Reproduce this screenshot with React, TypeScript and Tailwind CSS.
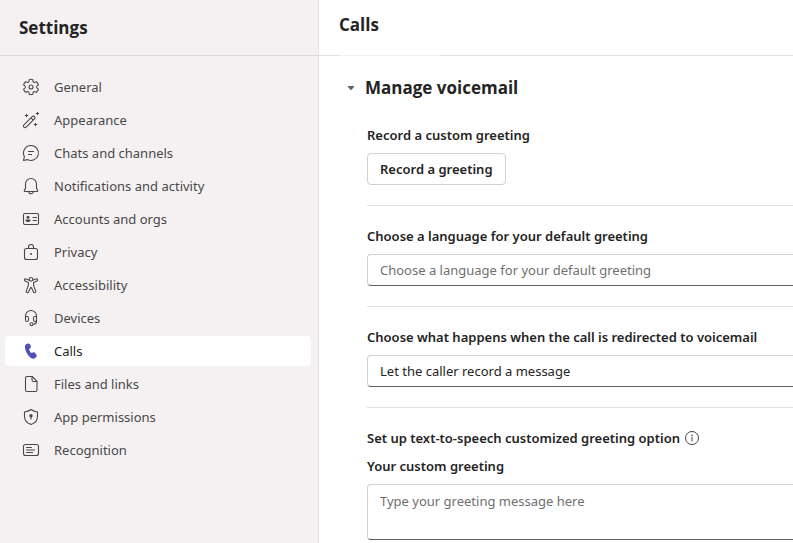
import React from "react";

type IconProps = { children: React.ReactNode };

const Icon: React.FC<IconProps> = ({ children }) => (
    <svg
        viewBox="0 0 20 20"
        className="h-5 w-5 shrink-0"
        fill="none"
        stroke="currentColor"
        strokeWidth="1.1"
        strokeLinecap="round"
        strokeLinejoin="round"
        aria-hidden="true"
    >
        {children}
    </svg>
);

const navItems = [
    {
        label: "General",
        icon: (
            <>
                <path d="M8.2 2.7Q10 1.9 11.8 2.7L12 4.3Q12.4 5.8 13.8 5.3L15.4 4.7Q16.9 5.9 17.4 7.8L16.1 8.9Q15 10 16.1 11.1L17.4 12.2Q16.9 14.1 15.4 15.3L13.8 14.7Q12.4 14.2 12 15.7L11.8 17.3Q10 18.1 8.2 17.3L8 15.7Q7.6 14.2 6.2 14.7L4.6 15.3Q3.1 14.1 2.6 12.2L3.9 11.1Q5 10 3.9 8.9L2.6 7.8Q3.1 5.9 4.6 4.7L6.2 5.3Q7.6 5.8 8 4.3Z" />
                <circle cx="10" cy="10" r="2" />
            </>
        ),
    },
    {
        label: "Appearance",
        icon: (
            <>
                <path d="M11.2 6.6a1.6 1.6 0 0 1 2.3 2.3L5.2 17.2a1.6 1.6 0 0 1-2.3-2.3zM10 7.8l2.3 2.3" />
                <path d="M5.5 4.3v2.4M4.3 5.5h2.4M16.5 2.3v2.4M15.3 3.5h2.4M14.5 13.3v2.4M13.3 14.5h2.4" />
            </>
        ),
    },
    {
        label: "Chats and channels",
        icon: (
            <>
                <path d="M10 2.5a7.5 7.5 0 1 1-3.6 14.1l-3.9.9.9-3.9A7.5 7.5 0 0 1 10 2.5z" />
                <path d="M7.5 8.5h5M7.5 11.5h3" />
            </>
        ),
    },
    {
        label: "Notifications and activity",
        icon: (
            <>
                <path d="M10 2.5A5.5 5.5 0 0 0 4.5 8v4l-1.2 2.8a.5.5 0 0 0 .5.7h12.4a.5.5 0 0 0 .5-.7L15.5 12V8A5.5 5.5 0 0 0 10 2.5z" />
                <path d="M7.8 15.8a2.2 2 0 0 0 4.4 0" />
            </>
        ),
    },
    {
        label: "Accounts and orgs",
        icon: (
            <>
                <rect x="2.5" y="4.5" width="15" height="11" rx="1.5" />
                <circle cx="7" cy="8.3" r="1.5" fill="currentColor" stroke="none" />
                <path d="M4.5 10.5h5v.7c0 1.2-1.1 1.8-2.5 1.8s-2.5-.6-2.5-1.8z" fill="currentColor" stroke="none" />
                <path d="M12 8.5h3.5M12 11.5h3.5" />
            </>
        ),
    },
    {
        label: "Privacy",
        icon: (
            <>
                <rect x="3.5" y="6.5" width="13" height="11" rx="2" />
                <path d="M7.5 6.5V5a2.5 2.5 0 0 1 5 0v1.5" />
                <circle cx="10" cy="12" r="1" fill="currentColor" stroke="none" />
            </>
        ),
    },
    {
        label: "Accessibility",
        icon: (
            <>
                <circle cx="10" cy="4.3" r="1.8" />
                <path d="M8.4 5.2L5.1 3.9a1.2 1.2 0 0 0-1 2.2L7.4 7.6v3L5.3 15.9a1.2 1.2 0 0 0 2.2 1l2.1-4.2q.4-.6.8 0l2.1 4.2a1.2 1.2 0 0 0 2.2-1l-2.1-5.3v-3l3.3-1.5a1.2 1.2 0 0 0-1-2.2l-3.3 1.3" />
            </>
        ),
    },
    {
        label: "Devices",
        icon: (
            <>
                <path d="M4.5 9V8a5.5 5.5 0 0 1 11 0v1" />
                <path d="M4.5 8.5H6A1.5 1.5 0 0 1 7.5 10v2A1.5 1.5 0 0 1 6 13.5a1.5 1.5 0 0 1-1.5-1.5zM15.5 8.5H14a1.5 1.5 0 0 0-1.5 1.5v2a1.5 1.5 0 0 0 1.5 1.5 1.5 1.5 0 0 0 1.5-1.5z" />
                <path d="M15.5 12v1.5c0 1.6-1.3 2.7-3 2.7" />
                <circle cx="10.5" cy="16.2" r="1.5" />
            </>
        ),
    },
    {
        label: "Calls",
        icon: (
            <path
                d="M7.06 2.42l-.96.29a3 3 0 0 0-2.05 2.14c-.46 2.03.19 4.47 1.9 7.43 1.7 2.94 3.48 4.72 5.47 5.3a3 3 0 0 0 2.91-.75l.74-.7a2 2 0 0 0 .25-2.61l-1.12-1.52a1.75 1.75 0 0 0-1.9-.64l-1.73.52c-.36.03-1-.48-1.65-1.6-.68-1.18-.85-1.98-.6-2.22l1.06-.98a1.75 1.75 0 0 0 .4-1.98l-.6-1.57a2 2 0 0 0-2.12-1.11z"
                fill="currentColor"
                stroke="none"
            />
        ),
    },
    {
        label: "Files and links",
        icon: (
            <>
                <path d="M6 2.5h5.2L16 7.3V16a1.5 1.5 0 0 1-1.5 1.5H6A1.5 1.5 0 0 1 4.5 16V4A1.5 1.5 0 0 1 6 2.5z" />
                <path d="M11 2.7V6a1.5 1.5 0 0 0 1.5 1.5h3.3" />
            </>
        ),
    },
    {
        label: "App permissions",
        icon: (
            <>
                <path d="M10 2.5q2.8 2 6.5 2.500v4.500q0 5.800-6.500 8-6.500-2.200-6.500-8V5Q7.200 4.500 10 2.500z" />
                <circle cx="10" cy="8.7" r="1.7" fill="currentColor" stroke="none" />
                <path d="M10 9v3" />
            </>
        ),
    },
    {
        label: "Recognition",
        icon: (
            <>
                <rect x="2.5" y="4.5" width="15" height="11" rx="2" />
                <path d="M5.5 7.5h5M5.5 10h8M5.5 12.5h6" />
            </>
        ),
    },
];

const fieldClass =
    "block w-full appearance-none rounded-l border border-r-0 border-[#d1d1d1] border-b-[#616161] bg-white px-3 text-[13px] leading-5 outline-none";

const labelClass = "block text-[13px] leading-5 font-semibold text-[#242424]";

const headingClass = "font-['Open_Sans',sans-serif] text-[17px] leading-6 font-bold";

const App: React.FC = () => {
    return (
        <div className="flex min-h-screen bg-white font-['Noto_Sans',sans-serif] text-[#242424]">
            {/* Sidebar */}
            <aside className="w-[319px] shrink-0 border-r border-[#e0dee0] bg-[#f5f1f3]">
                <header className="flex h-14 items-center border-b border-[#dbd8db] px-[19px]">
                    <h1 className={headingClass}>Settings</h1>
                </header>
                <nav className="flex flex-col gap-[3px] pt-4 pr-[7px] pl-[5px]">
                    {navItems.map((item) => (
                        <a
                            key={item.label}
                            href="#"
                            aria-current={item.label === "Calls" ? "page" : undefined}
                            className="group flex h-[30px] items-center gap-[13px] rounded px-4 text-[13px] leading-5 text-[#484848] aria-[current=page]:bg-white aria-[current=page]:text-[#242424]"
                        >
                            <span className="group-aria-[current=page]:text-[#4f52b2]">
                                <Icon>{item.icon}</Icon>
                            </span>
                            {item.label}
                        </a>
                    ))}
                </nav>
            </aside>

            {/* Calls settings */}
            <main className="min-w-0 flex-1">
                <header className="px-5 pt-[13px] pb-[18px]">
                    <h2 className={headingClass}>Calls</h2>
                </header>
                <div className="flex h-px bg-[#e0e0e0] pl-5">
                    <span className="w-[100px] bg-[#f0f0f0]" />
                </div>

                <section className="pt-5 pl-7">
                    <h3>
                        <button type="button" aria-expanded="true" className={`flex items-center gap-[10px] ${headingClass}`}>
                            <svg viewBox="0 0 8 8" className="h-2 w-2" fill="#616161" aria-hidden="true">
                                <path d="M1.3 2h5.4a.5.5 0 0 1 .4.8L4.6 5.8a.8.8 0 0 1-1.2 0L.9 2.8a.5.5 0 0 1 .4-.8z" />
                            </svg>
                            Manage voicemail
                        </button>
                    </h3>

                    <div className="pt-[25px] pl-5">
                        <p className={labelClass}>Record a custom greeting</p>
                        <button
                            type="button"
                            className="mt-2 h-8 rounded border border-[#d1d1d1] bg-white px-3 text-[13px] leading-5 font-semibold"
                        >
                            Record a greeting
                        </button>

                        <hr className="my-5 border-[#e0e0e0]" />

                        <label htmlFor="language" className={labelClass}>
                            Choose a language for your default greeting
                        </label>
                        <select id="language" defaultValue="" className={`${fieldClass} mt-2 h-8 text-[#707070]`}>
                            <option value="">Choose a language for your default greeting</option>
                        </select>

                        <hr className="my-5 border-[#e0e0e0]" />

                        <label htmlFor="redirect" className={labelClass}>
                            Choose what happens when the call is redirected to voicemail
                        </label>
                        <select id="redirect" className={`${fieldClass} mt-2 h-8 text-[#242424]`}>
                            <option>Let the caller record a message</option>
                        </select>

                        <hr className="my-5 border-[#e0e0e0]" />

                        <div className="flex items-center gap-1">
                            <p className={labelClass}>Set up text-to-speech customized greeting option</p>
                            <svg viewBox="0 0 16 16" className="h-4 w-4" fill="none" stroke="#424242" aria-hidden="true">
                                <circle cx="8" cy="8" r="6.5" />
                                <path d="M8 7.2V11" strokeLinecap="round" />
                                <circle cx="8" cy="5.2" r="0.8" fill="#424242" stroke="none" />
                            </svg>
                        </div>
                        <label htmlFor="greeting" className={`${labelClass} mt-2`}>
                            Your custom greeting
                        </label>
                        <textarea
                            id="greeting"
                            placeholder="Type your greeting message here"
                            className={`${fieldClass} mt-2 h-14 resize-none py-[6px] placeholder:text-[#707070]`}
                        />
                    </div>
                </section>
            </main>
        </div>
    );
};

export default App;
